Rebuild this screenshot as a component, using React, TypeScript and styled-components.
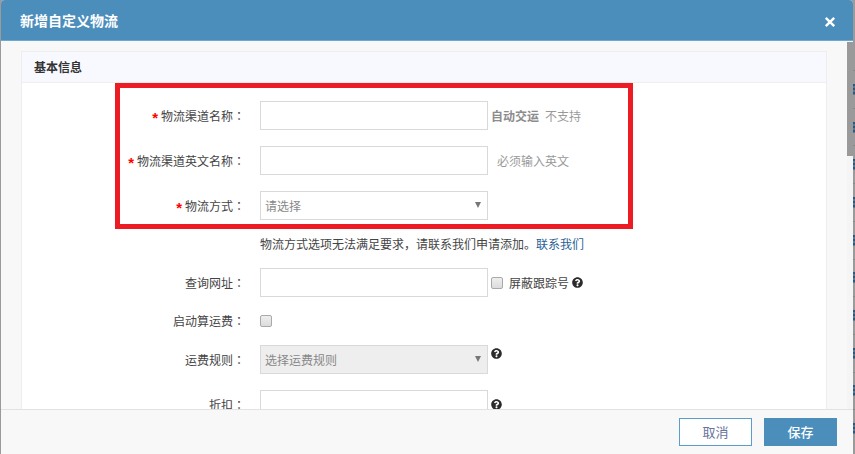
import React from 'react';
import styled, { createGlobalStyle } from 'styled-components';
import { FaQuestionCircle } from 'react-icons/fa';

const blue = '#4b8ebc';

const GlobalStyle = createGlobalStyle`
  * { box-sizing: border-box; }
  body {
    margin: 0;
    background: #9a9a9a;
    color: #333;
    font: 12px/16px "Noto Sans CJK SC", sans-serif;
  }
  button, input, select { font: inherit; border-radius: 0; margin: 0; }
`;

const Page = styled.div`
  position: relative;
  height: 100vh;
  padding: 0 2px 0 1px;
  overflow: hidden;
`;

const Backdrop = styled.div`
  position: absolute;
  inset: 0 0 0 auto;
  width: 2px;
  padding: 70px 0 7px;
  display: flex;
  flex-direction: column;
  overflow: hidden;
`;

const BackdropRow = styled.div`
  flex: 1;
  display: flex;
  align-items: center;
  border-top: 1px solid #878787;
  &::before {
    content: '';
    width: 2px;
    height: 11px;
    background: repeating-linear-gradient(#2f577c 0 2px, #5d7891 2px 4px);
  }
`;

const Dialog = styled.section`
  position: relative;
  height: 100%;
  display: flex;
  flex-direction: column;
  border-radius: 4px 4px 0 0;
  background: #f8f8f8;
  overflow: hidden;
`;

const Header = styled.header`
  display: flex;
  flex: none;
  align-items: center;
  justify-content: space-between;
  height: 41px;
  padding: 0 17px 0 19px;
  background: ${blue};
  border-bottom: 1px solid #6fa8cf;
  color: #fff;
`;

const Title = styled.h1`
  margin: 0;
  font-size: 14px;
  line-height: 20px;
`;

const CloseButton = styled.button`
  display: flex;
  padding: 4px 0 0;
  border: 0;
  background: none;
  color: inherit;
`;

const Body = styled.div`
  display: flex;
  flex: 1;
  min-height: 0;
`;

const Content = styled.div`
  flex: 1;
  padding: 10px 20px;
  overflow-y: auto;
  scrollbar-width: none;
`;

const Scrollbar = styled.div`
  width: 6px;
  padding-top: 1px;
  background: #f5f5f5;
`;

const Thumb = styled.div`
  height: 31%;
  background: #9a9a9a;
`;

const Panel = styled.section`
  border: 1px solid #eee;
  background: #fff;
`;

const PanelTitle = styled.h2`
  margin: 0;
  padding: 7px 12px;
  border-bottom: 1px solid #eee;
  background: #f8f9fe;
  font-size: 12px;
  line-height: 16px;
`;

const Form = styled.form`
  display: flex;
  flex-direction: column;
  gap: 16px;
  padding-bottom: 40px;
`;

const RequiredGroup = styled.div`
  position: relative;
  display: flex;
  flex-direction: column;
  gap: 16px;
  padding-top: 18px;
`;

const Highlight = styled.div`
  position: absolute;
  top: 0;
  bottom: -9px;
  left: 93px;
  width: 518px;
  border: 5px solid #ed1c24;
  pointer-events: none;
`;

const Row = styled.div`
  display: grid;
  grid-template-columns: 223px 1fr;
  column-gap: 15px;
  align-items: center;
`;

const Label = styled.label`
  display: flex;
  align-items: center;
  justify-content: flex-end;
  color: #444;
`;

const Star = styled.span`
  padding: 4px 3px 0 0;
  color: #f00;
  font: bold 15px/16px "Liberation Sans", sans-serif;
`;

const Colon = styled.span`
  font-family: "Noto Sans CJK TC", sans-serif;
`;

const Field = styled.div<{ $gap?: number }>`
  display: flex;
  align-items: center;
  gap: ${p => p.$gap ?? 3}px;
`;

const TextInput = styled.input`
  width: 228px;
  height: 29px;
  padding: 0 5px;
  border: 1px solid #d9d9d9;
  background: #fff;
`;

const SelectBox = styled.div`
  position: relative;
  width: 228px;
  height: 29px;
`;

const Select = styled.select`
  appearance: none;
  width: 100%;
  height: 100%;
  padding: 0 20px 0 4px;
  border: 1px solid #d9d9d9;
  background: #fff;
  color: #888;
  opacity: 1;
  &:disabled { background: #eee; }
`;

const Arrow = styled.svg`
  position: absolute;
  top: 10px;
  right: 7px;
  pointer-events: none;
`;

const Checkbox = styled.input`
  appearance: none;
  width: 12px;
  height: 12px;
  border: 1px solid #a9a9a9;
  border-radius: 2px;
  background: linear-gradient(#eee, #dcdcdc);
`;

const InlineLabel = styled.label`
  display: flex;
  align-items: center;
  gap: 6px;
  color: #444;
`;

const Hint = styled.span`
  color: #999;
`;

const HintTitle = styled.b`
  margin-right: 6px;
  color: #8c8c8c;
`;

const Note = styled.p`
  grid-column: 2;
  margin: 0;
  color: #444;
`;

const Link = styled.a`
  color: #2a5f95;
  text-decoration: none;
`;

const HelpIcon = styled(FaQuestionCircle)<{ $top?: boolean }>`
  align-self: ${p => (p.$top ? 'flex-start' : 'center')};
  margin-top: ${p => (p.$top ? 3 : 0)}px;
  color: #2b2b2b;
`;

const Footer = styled.footer`
  display: flex;
  flex: none;
  justify-content: flex-end;
  gap: 12px;
  padding: 8px 16px;
  border-top: 1px solid #e2e2e2;
  background: #f8f8f8;
`;

const Button = styled.button<{ $primary?: boolean }>`
  width: 73px;
  height: 28px;
  padding: 0;
  border: 1px solid ${p => (p.$primary ? blue : '#5a9fcc')};
  background: ${p => (p.$primary ? blue : '#fff')};
  color: ${p => (p.$primary ? '#fff' : '#68749b')};
  font-size: 13px;
  font-weight: ${p => (p.$primary ? 500 : 400)};
`;

function FieldLabel({ id, text, required }: { id: string; text: string; required?: boolean }) {
  return (
    <Label htmlFor={id}>
      {required && <Star>*</Star>}
      {text}
      <Colon>：</Colon>
    </Label>
  );
}

function Dropdown({ id, text, disabled }: { id: string; text: string; disabled?: boolean }) {
  return (
    <SelectBox>
      <Select id={id} disabled={disabled}>
        <option>{text}</option>
      </Select>
      <Arrow width="6" height="7" viewBox="0 0 6 7" aria-hidden="true">
        <path d="M0 1h6L3 7z" fill="#777" />
      </Arrow>
    </SelectBox>
  );
}

export default function App() {
  return (
    <>
      <GlobalStyle />
      <Page>
        <Backdrop aria-hidden="true">
          {Array.from({ length: 10 }, (_, i) => (
            <BackdropRow key={i} />
          ))}
        </Backdrop>
        <Dialog role="dialog" aria-labelledby="dialog-title">
          <Header>
            <Title id="dialog-title">新增自定义物流</Title>
            <CloseButton type="button" aria-label="关闭">
              <svg width="12" height="12" viewBox="0 0 12 12" fill="none" stroke="currentColor" strokeWidth="2.4">
                <path d="M1.8 1.8l8.4 8.4M10.2 1.8l-8.4 8.4" />
              </svg>
            </CloseButton>
          </Header>
          <Body>
            <Content>
              <Panel>
                <PanelTitle>基本信息</PanelTitle>
                <Form>
                  <RequiredGroup>
                    <Row>
                      <FieldLabel id="name" text="物流渠道名称" required />
                      <Field>
                        <TextInput id="name" />
                        <Hint>
                          <HintTitle>自动交运</HintTitle>不支持
                        </Hint>
                      </Field>
                    </Row>
                    <Row>
                      <FieldLabel id="name-en" text="物流渠道英文名称" required />
                      <Field $gap={9}>
                        <TextInput id="name-en" />
                        <Hint>必须输入英文</Hint>
                      </Field>
                    </Row>
                    <Row>
                      <FieldLabel id="method" text="物流方式" required />
                      <Field>
                        <Dropdown id="method" text="请选择" />
                      </Field>
                    </Row>
                    <Highlight />
                  </RequiredGroup>
                  <Row>
                    <Note>
                      物流方式选项无法满足要求，请联系我们申请添加。<Link href="#contact">联系我们</Link>
                    </Note>
                  </Row>
                  <Row>
                    <FieldLabel id="url" text="查询网址" />
                    <Field>
                      <TextInput id="url" />
                      <InlineLabel>
                        <Checkbox type="checkbox" />
                        屏蔽跟踪号
                      </InlineLabel>
                      <HelpIcon size={11} />
                    </Field>
                  </Row>
                  <Row>
                    <FieldLabel id="freight" text="启动算运费" />
                    <Field>
                      <Checkbox id="freight" type="checkbox" />
                    </Field>
                  </Row>
                  <Row>
                    <FieldLabel id="rule" text="运费规则" />
                    <Field>
                      <Dropdown id="rule" text="选择运费规则" disabled />
                      <HelpIcon size={11} $top />
                    </Field>
                  </Row>
                  <Row>
                    <FieldLabel id="discount" text="折扣" />
                    <Field>
                      <TextInput id="discount" />
                      <HelpIcon size={11} />
                    </Field>
                  </Row>
                </Form>
              </Panel>
            </Content>
            <Scrollbar>
              <Thumb />
            </Scrollbar>
          </Body>
          <Footer>
            <Button type="button">取消</Button>
            <Button type="button" $primary>保存</Button>
          </Footer>
        </Dialog>
      </Page>
    </>
  );
}
